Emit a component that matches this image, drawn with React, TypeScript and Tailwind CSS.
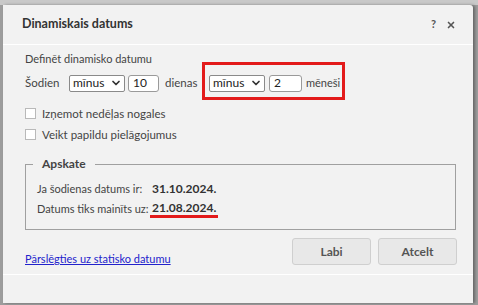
import React from "react";
import { ChevronDown, X } from "lucide-react";

function FakeSelect({ value }: { value: string }) {
  return (
    <div className="h-[17px] w-[56px] bg-white border border-[#8a8a8a] rounded-[2px] flex items-center justify-between pl-[3px] pr-[2px]">
      <span className="text-[12px] leading-none text-[#222]">{value}</span>
      <ChevronDown className="w-[12px] h-[12px] text-[#333]" strokeWidth={3.5} />
    </div>
  );
}

function NumInput({ value, width }: { value: string; width: string }) {
  return (
    <div className={`h-[17px] ${width} bg-white border border-[#9a9a9a] rounded-[3px] flex items-center pl-[4px]`}>
      <span className="text-[12px] leading-none text-[#222]">{value}</span>
    </div>
  );
}

function Check({ label }: { label: string }) {
  return (
    <div className="flex items-center gap-[6px] h-[21px]">
      <span className="w-[11px] h-[11px] bg-white border border-[#b9b9b9]" />
      <span className="text-[11.5px] text-[#444]">{label}</span>
    </div>
  );
}

export default function App() {
  return (
    <div
      className="w-[478px] h-[305px] bg-[#9d9d9d] overflow-hidden relative whitespace-nowrap"
      style={{ fontFamily: 'Lato, "Liberation Sans", sans-serif' }}
    >
      <div className="h-[5px] bg-[#c9c9c9]" />
      <div className="ml-[3px] w-[470px] h-[298px] bg-[#f2f2f2] rounded-tr-[3px] shadow-[2px_0_3px_rgba(0,0,0,0.35)] flex flex-col">
        {/* title bar */}
        <div className="h-[40px] border-b border-white flex items-center pl-[19px] pr-[17px]">
          <span className="text-[12.5px] font-bold text-[#333]">Dinamiskais datums</span>
          <div className="ml-auto flex items-center gap-[10px] text-[#555]">
            <span className="text-[11px] font-bold">?</span>
            <X className="w-[10px] h-[10px]" strokeWidth={4} />
          </div>
        </div>

        {/* body */}
        <div className="flex-1 pl-[22px] pr-[16px] pt-[7px] text-[#444]">
          <div className="text-[11px] h-[14px] leading-[14px]">Definēt dinamisko datumu</div>

          <div className="flex items-center h-[38px] -mt-[4px]">
            <div className="flex items-center pt-[4px]">
              <span className="text-[11.5px] w-[44px]">Šodien</span>
              <FakeSelect value="mīnus" />
              <div className="ml-[3px]">
                <NumInput value="10" width="w-[31px]" />
              </div>
              <span className="text-[11.5px] ml-[6px]">dienas</span>
            </div>
            <div className="ml-auto mr-[112px] border-[3px] border-[#e31b1b] h-[38px] w-[143px] flex items-center pl-[4px] pt-[4px]">
              <FakeSelect value="mīnus" />
              <div className="ml-[4px]">
                <NumInput value="2" width="w-[33px]" />
              </div>
              <span className="text-[11px] ml-[4px]">mēneši</span>
            </div>
          </div>

          <div className="mt-[3px]">
            <Check label="Izņemot nedēļas nogales" />
            <Check label="Veikt papildu pielāgojumus" />
          </div>

          <fieldset className="mt-[10px] w-[431px] h-[75px] border border-[#a0a0a0] px-[11px] pt-[6px]">
            <legend className="px-[9px] -ml-[4px] text-[12px] font-bold text-[#444]">Apskate</legend>
            <div className="flex items-center h-[20px]">
              <span className="text-[11px] w-[115px]">Ja šodienas datums ir:</span>
              <span className="text-[12px] font-bold text-[#333]">31.10.2024.</span>
            </div>
            <div className="flex items-center h-[20px]">
              <span className="text-[11px] w-[113px]">Datums tiks mainīts uz:</span>
              <span className="text-[12px] font-bold text-[#333] px-[2px] border-b-[3px] border-[#e31b1b] leading-[15px]">21.08.2024.</span>
            </div>
          </fieldset>

          <div className="flex items-start mt-[8px]">
            <a className="text-[11px] text-[#2222cc] underline mt-[13px]">Pārslēgties uz statisko datumu</a>
            <div className="ml-auto flex gap-[7px]">
              <button className="w-[79px] h-[27px] bg-[#e8e8e8] border border-[#cfcfcf] rounded-[3px] text-[12px] font-bold text-[#555]">Labi</button>
              <button className="w-[79px] h-[27px] bg-[#e8e8e8] border border-[#cfcfcf] rounded-[3px] text-[12px] font-bold text-[#555]">Atcelt</button>
            </div>
          </div>
        </div>
        <div className="h-[29px] border-t border-white" />
      </div>
    </div>
  );
}
